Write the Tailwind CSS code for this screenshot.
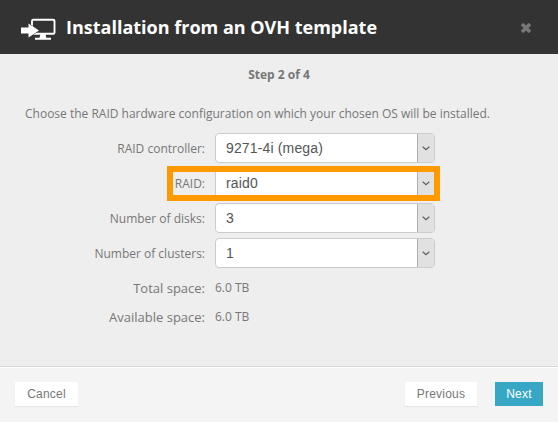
<!DOCTYPE html>
<html lang="en">
<head>
<meta charset="utf-8">
<title>Installation from an OVH template</title>
<script src="https://cdn.jsdelivr.net/npm/@tailwindcss/browser@4"></script>
</head>
<body class="w-[558px] h-[422px] overflow-hidden bg-[#eee] text-[#777] font-['Open_Sans','Noto_Sans',sans-serif] text-[12px]">
<div class="flex flex-col h-[422px]">
  <header class="h-[54px] shrink-0 bg-[#333] flex items-center pl-[21px] pr-[26px]">
    <svg class="w-[35px] h-[24px] shrink-0 mt-[4px]" viewBox="0 0 35 24" fill="none">
      <rect x="11" y="2.800" width="22.500" height="14" rx="1.300" stroke="#fff" stroke-width="1.900"/>
      <path d="M19.500 17h5l.8 3.800H18.500zM14 20.800h16v2H14z" fill="#fff"/>
      <path d="M0 10.500h7.500V6.500L18 13.500 7.500 20.500V16.500H0z" fill="#fff" stroke="#333" stroke-width="1" paint-order="stroke"/>
    </svg>
    <h1 class="ml-[10px] text-[18px] leading-[24px] font-bold text-white whitespace-nowrap">Installation from an OVH template</h1>
    <button class="ml-auto mt-[2px] w-[12px] h-[12px]" aria-label="Close">
      <svg class="block w-[12px] h-[12px]" viewBox="0 0 12 12"><path d="M2 2l8 8M10 2l-8 8" stroke="#777" stroke-width="3.600"/></svg>
    </button>
  </header>
  <main class="h-[312px] shrink-0 flex flex-col">
    <h2 class="mt-[12px] h-[18px] leading-[18px] text-[12px] font-bold text-center">Step 2 of 4</h2>
    <p class="mt-[21px] ml-[25px] h-[18px] leading-[18px] whitespace-nowrap">Choose the RAID hardware configuration on which your chosen OS will be installed.</p>
    <div class="mt-[10px] flex flex-col gap-[5px]">
      <div class="flex h-[30px] items-center">
        <label class="w-[205px] pt-[2px] text-right">RAID controller:</label>
        <div class="ml-[10px] w-[220px] h-[30px] rounded-[4px] border border-[#ccc] bg-white flex overflow-hidden">
          <span class="flex-1 pl-[10px] leading-[28px] text-[14px] tracking-[0.15px] text-[#555] font-['Liberation_Sans',sans-serif]">9271-4i (mega)</span>
          <span class="w-[17px] bg-[#e1e1e1] border-l border-[#adadad] flex items-center justify-center"><svg class="w-[8px] h-[5px]" viewBox="0 0 8 5" fill="none"><path d="M.7.700L4 3.800 7.300.700" stroke="#606060" stroke-width="1.200"/></svg></span>
        </div>
      </div>
      <div class="relative flex h-[30px] items-center">
        <label class="w-[205px] pt-[2px] text-right">RAID:</label>
        <div class="ml-[10px] w-[220px] h-[30px] rounded-[4px] border border-[#ccc] bg-white flex overflow-hidden">
          <span class="flex-1 pl-[10px] leading-[28px] text-[14px] tracking-[0.15px] text-[#555] font-['Liberation_Sans',sans-serif]">raid0</span>
          <span class="w-[17px] bg-[#e1e1e1] border-l border-[#adadad] flex items-center justify-center"><svg class="w-[8px] h-[5px]" viewBox="0 0 8 5" fill="none"><path d="M.7.700L4 3.800 7.300.700" stroke="#606060" stroke-width="1.200"/></svg></span>
        </div>
        <div class="absolute left-[167px] top-[-2px] w-[273px] h-[35px] border-[6px] border-[#ff9900]"></div>
      </div>
      <div class="flex h-[30px] items-center">
        <label class="w-[205px] pt-[2px] text-right">Number of disks:</label>
        <div class="ml-[10px] w-[220px] h-[30px] rounded-[4px] border border-[#ccc] bg-white flex overflow-hidden">
          <span class="flex-1 pl-[10px] leading-[28px] text-[14px] text-[#555] font-['Liberation_Sans',sans-serif]">3</span>
          <span class="w-[17px] bg-[#e1e1e1] border-l border-[#adadad] flex items-center justify-center"><svg class="w-[8px] h-[5px]" viewBox="0 0 8 5" fill="none"><path d="M.7.700L4 3.800 7.300.700" stroke="#606060" stroke-width="1.200"/></svg></span>
        </div>
      </div>
      <div class="flex h-[30px] items-center">
        <label class="w-[205px] pt-[2px] text-right">Number of clusters:</label>
        <div class="ml-[10px] w-[220px] h-[30px] rounded-[4px] border border-[#ccc] bg-white flex overflow-hidden">
          <span class="flex-1 pl-[10px] leading-[28px] text-[14px] text-[#555] font-['Liberation_Sans',sans-serif]">1</span>
          <span class="w-[17px] bg-[#e1e1e1] border-l border-[#adadad] flex items-center justify-center"><svg class="w-[8px] h-[5px]" viewBox="0 0 8 5" fill="none"><path d="M.7.700L4 3.800 7.300.700" stroke="#606060" stroke-width="1.200"/></svg></span>
        </div>
      </div>
    </div>
    <div class="mt-[11px] flex flex-col gap-[11px] leading-[18px]">
      <div class="flex"><span class="w-[205px] text-right text-[13px]">Total space:</span><span class="ml-[10px]">6.0 TB</span></div>
      <div class="flex"><span class="w-[205px] text-right text-[13px]">Available space:</span><span class="ml-[10px]">6.0 TB</span></div>
    </div>
  </main>
  <footer class="flex-1 border-t border-[#d8d8d8] bg-[#f4f4f4] shadow-[inset_0_1px_0_#fff] flex items-start pt-[15px] pl-[15px] pr-[15px] font-['Liberation_Sans',sans-serif] text-[12px] leading-[24px] tracking-[0.2px]">
    <button class="w-[63px] h-[24px] bg-white shadow-[0_1px_1px_rgba(0,0,0,0.06)]">Cancel</button>
    <button class="ml-auto w-[72px] h-[24px] bg-white shadow-[0_1px_1px_rgba(0,0,0,0.06)]">Previous</button>
    <button class="ml-[18px] w-[48px] h-[24px] bg-[#38a7c5] text-white">Next</button>
  </footer>
</div>
</body>
</html>
